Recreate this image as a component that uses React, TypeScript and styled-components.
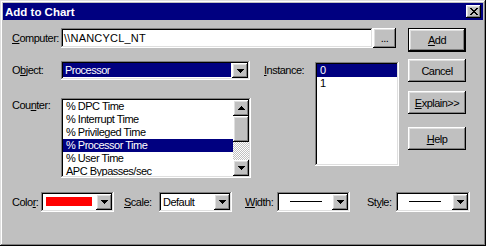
import React from "react";
import styled, { createGlobalStyle } from "styled-components";

const GlobalStyle = createGlobalStyle`
  html, body {
    margin: 0;
    padding: 0;
    background: #c0c0c0;
  }
  body {
    font-family: "Liberation Sans", Arial, sans-serif;
    font-size: 11px;
    letter-spacing: -0.5px;
    color: #000;
  }
`;

const raised = `
  box-shadow: inset -1px -1px #000, inset 1px 1px #fff,
    inset -2px -2px #808080, inset 2px 2px #dfdfdf;
`;

const sunken = `
  box-shadow: inset -1px -1px #fff, inset 1px 1px #808080,
    inset -2px -2px #dfdfdf, inset 2px 2px #000;
`;

const Window = styled.div`
  width: 486px;
  height: 246px;
  box-sizing: border-box;
  padding: 3px;
  background: #c0c0c0;
  box-shadow: inset -1px -1px #000, inset 1px 1px #dfdfdf,
    inset -2px -2px #808080, inset 2px 2px #fff;
  display: flex;
  flex-direction: column;
`;

const TitleBar = styled.div`
  height: 17px;
  background: #000080;
  display: flex;
  align-items: center;
  justify-content: space-between;
  padding: 0 2px 0 2px;
`;

const Title = styled.span`
  color: #fff;
  font-weight: bold;
  font-size: 11.5px;
  letter-spacing: 0;
`;

const CloseButton = styled.div`
  width: 15px;
  height: 13px;
  background: #c0c0c0;
  ${raised}
  display: flex;
  align-items: center;
  justify-content: center;
`;

const Body = styled.div`
  display: flex;
  flex-direction: column;
  padding: 8px 0 0 9px;
`;

const Top = styled.div`
  display: flex;
  gap: 9px;
`;

const FormGrid = styled.div`
  display: grid;
  grid-template-columns: 49px 190px 13px 51px 84px;
  grid-template-rows: 20px 13px 19px 18px 80px;
`;

const Label = styled.div<{ $row: number; $col?: number; $lh?: number; $pt?: number }>`
  grid-row: ${(p) => p.$row};
  grid-column: ${(p) => p.$col ?? 1};
  line-height: ${(p) => p.$lh ?? 20}px;
  padding-top: ${(p) => p.$pt ?? 0}px;
  white-space: nowrap;
`;

const ComputerRow = styled.div`
  grid-row: 1;
  grid-column: 2 / 6;
  display: flex;
`;

const TextField = styled.div`
  width: 312px;
  height: 20px;
  box-sizing: border-box;
  background: #fff;
  ${sunken}
  padding: 0 3px;
  line-height: 20px;
  letter-spacing: 0.2px;
`;

const Button = styled.div<{ $w?: number; $h?: number; $mt?: number; $default?: boolean }>`
  width: ${(p) => p.$w ?? 58}px;
  height: ${(p) => p.$h ?? 23}px;
  margin-top: ${(p) => p.$mt ?? 0}px;
  box-sizing: border-box;
  background: #c0c0c0;
  display: flex;
  align-items: center;
  justify-content: center;
  ${(p) =>
    p.$default
      ? `box-shadow: inset 0 0 0 1px #000, inset -2px -2px #000, inset 2px 2px #fff,
          inset -3px -3px #808080, inset 3px 3px #dfdfdf;`
      : raised}
`;

const Combo = styled.div<{ $w: number; $h: number; $row?: number }>`
  width: ${(p) => p.$w}px;
  height: ${(p) => p.$h}px;
  box-sizing: border-box;
  padding: 2px;
  background: #fff;
  ${sunken}
  display: flex;
  ${(p) => (p.$row ? `grid-row: ${p.$row}; grid-column: 2;` : "")}
`;

const ComboValue = styled.div<{ $selected?: boolean }>`
  flex: 1;
  display: flex;
  align-items: center;
  padding-left: 2px;
  margin: 0 1px 1px 0;
  white-space: nowrap;
  background: ${(p) => (p.$selected ? "#000080" : "transparent")};
  color: ${(p) => (p.$selected ? "#fff" : "#000")};
`;

const ArrowButton = styled.div<{ $h?: number }>`
  width: 16px;
  height: ${(p) => (p.$h ? `${p.$h}px` : "100%")};
  flex-shrink: 0;
  box-sizing: border-box;
  background: #c0c0c0;
  ${raised}
  display: flex;
  align-items: center;
  justify-content: center;
`;

const ListBox = styled.div<{ $h: number; $row: string; $col: number; $mt?: number }>`
  grid-row: ${(p) => p.$row};
  grid-column: ${(p) => p.$col};
  align-self: start;
  margin-top: ${(p) => p.$mt ?? 0}px;
  height: ${(p) => p.$h}px;
  box-sizing: border-box;
  padding: 2px;
  background: #fff;
  ${sunken}
  display: flex;
  overflow: hidden;
`;

const Items = styled.div`
  flex: 1;
  overflow: hidden;
`;

const Item = styled.div<{ $selected?: boolean }>`
  height: 13px;
  line-height: 13px;
  padding-left: 3px;
  white-space: nowrap;
  background: ${(p) => (p.$selected ? "#000080" : "transparent")};
  color: ${(p) => (p.$selected ? "#fff" : "#000")};
`;

const ScrollBar = styled.div`
  width: 16px;
  display: flex;
  flex-direction: column;
`;

const Thumb = styled.div`
  height: 26px;
  background: #c0c0c0;
  ${raised}
`;

const Track = styled.div`
  flex: 1;
  background-image: repeating-conic-gradient(#fff 0 25%, #c0c0c0 0 50%);
  background-size: 2px 2px;
`;

const ButtonColumn = styled.div`
  display: flex;
  flex-direction: column;
`;

const BottomRow = styled.div`
  display: grid;
  grid-template-columns: 112px 121px 122px auto;
  margin-top: 14px;
`;

const Field = styled.div`
  display: flex;
  align-items: center;
`;

const FieldLabel = styled.div<{ $w: number }>`
  width: ${(p) => p.$w}px;
  white-space: nowrap;
`;

const Swatch = styled.div`
  width: 46px;
  height: 9px;
  margin: 3px 0 0 3px;
  background: #ff0000;
`;

const LineSample = styled.div`
  width: 32px;
  height: 1px;
  margin: 7px 0 0 11px;
  background: #000;
`;

const Blank = styled.div`
  flex: 1;
`;

function Pixels({ rows }: { rows: string[] }) {
  return (
    <svg width={rows[0].length} height={rows.length} shapeRendering="crispEdges">
      {rows.flatMap((r, y) =>
        r.split("").map((c, x) =>
          c === "1" ? <rect key={`${x}-${y}`} x={x} y={y} width={1} height={1} fill="#000" /> : null
        )
      )}
    </svg>
  );
}

const closeRows = ["11000011", "01100110", "00111100", "00011000", "00111100", "01100110", "11000011"];
const downRows = ["1111111", "0111110", "0011100", "0001000"];
const upRows = [...downRows].reverse();

const DownArrow = () => <Pixels rows={downRows} />;

const counters = [
  "% DPC Time",
  "% Interrupt Time",
  "% Privileged Time",
  "% Processor Time",
  "% User Time",
  "APC Bypasses/sec",
];

export default function App() {
  return (
    <>
      <GlobalStyle />
      <Window>
        <TitleBar>
          <Title>Add to Chart</Title>
          <CloseButton>
            <Pixels rows={closeRows} />
          </CloseButton>
        </TitleBar>
        <Body>
          <Top>
            <FormGrid>
              <Label $row={1}>
                <u>C</u>omputer:
              </Label>
              <ComputerRow>
                <TextField>\\NANCYCL_NT</TextField>
                <Button $w={23} $h={20}>...</Button>
              </ComputerRow>

              <Label $row={3} $lh={19}>
                O<u>b</u>ject:
              </Label>
              <Combo $w={189} $h={19} $row={3}>
                <ComboValue $selected>Processor</ComboValue>
                <ArrowButton>
                  <DownArrow />
                </ArrowButton>
              </Combo>

              <Label $row={3} $col={4} $lh={19}>
                <u>I</u>nstance:
              </Label>
              <ListBox $h={104} $row="3 / 6" $col={5} $mt={1}>
                <Items>
                  <Item $selected>0</Item>
                  <Item>1</Item>
                </Items>
              </ListBox>

              <Label $row={5} $lh={13} $pt={1}>
                Cou<u>n</u>ter:
              </Label>
              <ListBox $h={80} $row="5" $col={2}>
                <Items>
                  {counters.map((c) => (
                    <Item key={c} $selected={c === "% Processor Time"}>
                      {c}
                    </Item>
                  ))}
                </Items>
                <ScrollBar>
                  <ArrowButton $h={16}>
                    <Pixels rows={upRows} />
                  </ArrowButton>
                  <Thumb />
                  <Track />
                  <ArrowButton $h={16}>
                    <DownArrow />
                  </ArrowButton>
                </ScrollBar>
              </ListBox>
            </FormGrid>

            <ButtonColumn>
              <Button $h={24} $default>
                <u>A</u>dd
              </Button>
              <Button $mt={7}>Cancel</Button>
              <Button $mt={9}>
                <u>E</u>xplain&gt;&gt;
              </Button>
              <Button $mt={13}>
                <u>H</u>elp
              </Button>
            </ButtonColumn>
          </Top>

          <BottomRow>
            <Field>
              <FieldLabel $w={29}>
                Colo<u>r</u>:
              </FieldLabel>
              <Combo $w={73} $h={20}>
                <Blank>
                  <Swatch />
                </Blank>
                <ArrowButton>
                  <DownArrow />
                </ArrowButton>
              </Combo>
            </Field>
            <Field>
              <FieldLabel $w={35}>
                <u>S</u>cale:
              </FieldLabel>
              <Combo $w={73} $h={20}>
                <ComboValue>Default</ComboValue>
                <ArrowButton>
                  <DownArrow />
                </ArrowButton>
              </Combo>
            </Field>
            <Field>
              <FieldLabel $w={32}>
                <u>W</u>idth:
              </FieldLabel>
              <Combo $w={73} $h={20}>
                <Blank>
                  <LineSample />
                </Blank>
                <ArrowButton>
                  <DownArrow />
                </ArrowButton>
              </Combo>
            </Field>
            <Field>
              <FieldLabel $w={29}>
                St<u>y</u>le:
              </FieldLabel>
              <Combo $w={74} $h={20}>
                <Blank>
                  <LineSample />
                </Blank>
                <ArrowButton>
                  <DownArrow />
                </ArrowButton>
              </Combo>
            </Field>
          </BottomRow>
        </Body>
      </Window>
    </>
  );
}
